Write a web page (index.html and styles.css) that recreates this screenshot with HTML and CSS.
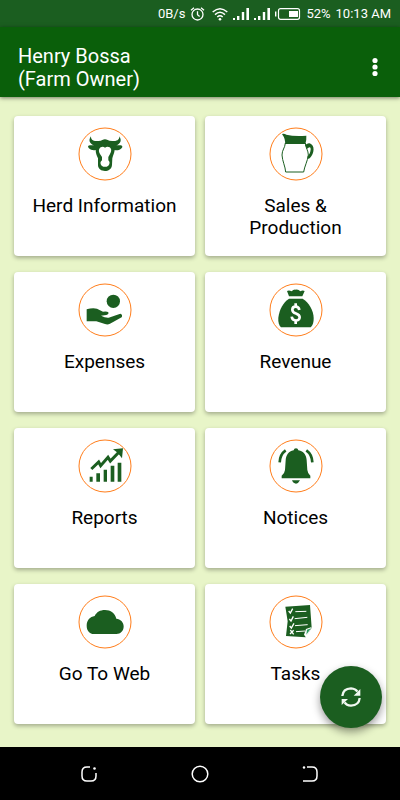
FILE: index.html
```html
<!DOCTYPE html>
<html lang="en">
<head>
  <meta charset="UTF-8" />
  <meta name="viewport" content="width=device-width, initial-scale=1.0"/>
  <title>Farm Dashboard</title>
  <link rel="stylesheet" href="styles.css">
</head>
<body>

  <div class="status-bar">
    <span>0B/s</span>
    <svg class="status-icon" width="15" height="16" viewBox="0 0 15 16">
      <circle cx="7.5" cy="8.5" r="5.5" fill="none" stroke="#fff" stroke-width="1.3"/>
      <path d="M7.5 5.3V8.7L9.6 10.6M1 4.2L4 1.7M14 4.2L11 1.7" fill="none" stroke="#fff" stroke-width="1.3"/>
    </svg>
    <svg class="status-icon wifi" width="16" height="16" viewBox="0 0 16 16">
      <path d="M.7 6Q8 -.6 15.3 6M3 8.6Q8 4 13 8.6M5.3 11Q8 8.6 10.7 11" fill="none" stroke="#fff" stroke-width="1.5"/>
      <circle cx="8" cy="13.2" r="1.3" fill="#fff"/>
    </svg>
    <svg class="status-icon" width="16" height="14" viewBox="0 0 16 14">
      <path d="M0 11h2v2H0zM4 9h2.4v4H4zM8.8 5h2.4v8H8.8zM13.4 1H16v12h-2.6z" fill="#fff"/>
    </svg>
    <svg class="status-icon" width="16" height="14" viewBox="0 0 16 14">
      <path d="M0 11h2v2H0zM4 9h2.4v4H4zM8.8 5h2.4v8H8.8zM13.4 1H16v12h-2.6z" fill="#fff"/>
    </svg>
    <svg class="status-icon" width="26" height="12" viewBox="0 0 26 12">
      <path d="M.7 3.500v5" stroke="#fff" stroke-width="1.4"/>
      <rect x="3.5" y=".7" width="21" height="10.600" rx="2" fill="none" stroke="#fff" stroke-width="1.2"/>
      <rect x="14" y="3" width="9" height="6" fill="#fff"/>
    </svg>
    <span>52%</span>
    <span>10:13 AM</span>
  </div>

  <header class="app-bar">
    <h1>Henry Bossa<br>(Farm Owner)</h1>
    <button class="menu-btn" aria-label="More options">
      <svg width="6" height="20" viewBox="0 0 6 20" fill="#fff">
        <circle cx="3" cy="3.5" r="2.6"/>
        <circle cx="3" cy="10" r="2.6"/>
        <circle cx="3" cy="16.5" r="2.6"/>
      </svg>
    </button>
  </header>

  <main class="dashboard">
    <div class="card-grid">
      <button class="card">
        <svg class="card-icon" viewBox="22 22 162 162">
          <circle class="ring" cx="103" cy="103" r="78"/>
          <path d="M61 50C60 59 67 66 83 64Q91 64 95 61Q103 57 111 61Q115 64 125 64C141 66 147 58 146 50C154 62 150 73 137 77L150 77C157 78 156 84 151 87C145 92 138 93 132 91C131 100 127 108 125 116L124 136C123 149 113 154 103 154C92 154 83 149 82 137L82 116C78 108 75 100 75 91C68 93 60 91 54 85C50 80 53 77 58 77L70 77C57 73 52 62 61 50Z"/>
          <path class="cut" d="M90 83Q97 79 103 84Q110 79 117 83C124 88 122 96 118 103L113 112V122C118 126 118 133 113 138Q103 145 93 138C88 133 88 126 94 122V112L88 103C84 96 83 88 90 83Z"/>
        </svg>
        <span>Herd Information</span>
      </button>
      <button class="card">
        <svg class="card-icon" viewBox="26 22 162 162">
          <circle class="ring" cx="107" cy="103" r="78"/>
          <path d="M65 43Q71 40 78 45Q102 51 138 48Q139 61 135 73H74Q76 58 65 43Z"/>
          <path d="M75 70C74 85 65 91 65 106C66 124 75 141 76 157H130C132 141 142 124 144 106C144 92 136 86 135 70" fill="none" stroke="#1b5e20" stroke-width="3"/>
          <path d="M135 76Q145 68 152 73C167 83 158 110 145 118L141 113C147 107 153 97 152 87Q150 78 139 88Z"/>
          <path d="M137 80Q147 71 153 80Q158 95 144 113" fill="none" stroke="#1b5e20" stroke-width="6"/>
        </svg>
        <span>Sales &amp;<br>Production</span>
      </button>
      <button class="card">
        <svg class="card-icon" viewBox="22 22 162 162">
          <circle class="ring" cx="103" cy="103" r="78"/>
          <circle cx="128" cy="77" r="20"/>
          <path d="M48 101Q65 96 79 99L97 108Q109 106 113 110Q115 116 107 118L91 120Q104 127 114 126L149 114Q157 117 153 125L118 144Q111 148 103 145L77 137H48Z"/>
        </svg>
        <span>Expenses</span>
      </button>
      <button class="card">
        <svg class="card-icon" viewBox="26 22 162 162">
          <circle class="ring" cx="107" cy="103" r="78"/>
          <path d="M80 46Q86 42 94 47Q99 41 106 42Q114 40 120 47Q127 42 133 46L126 62H86Z"/>
          <path d="M86 69H127C144 79 160 104 160 127C160 142 157 149 151 155H62C56 149 53 140 54 126C57 101 69 80 86 69Z"/>
          <path d="M117 103C115 89 96 90 96 102C96 117 118 110 118 125C118 138 96 138 94 123M106 83V94M106 132V145" fill="none" stroke="#fff" stroke-width="8"/>
        </svg>
        <span>Revenue</span>
      </button>
      <button class="card">
        <svg class="card-icon" viewBox="22 19 162 162">
          <circle class="ring" cx="103" cy="100" r="78"/>
          <path d="M57 132h9v15h-9zM77 122h11v25H77zM99 111h10v36H99zM120 99h11v48h-11zM141 90h11v57h-11z"/>
          <path d="M62 109L84 88L90 99L112 74L119 85L146 57" fill="none" stroke="#1b5e20" stroke-width="9"/>
          <path d="M127 50L157 47L154 77L147 68L137 57Z"/>
        </svg>
        <span>Reports</span>
      </button>
      <button class="card">
        <svg class="card-icon" viewBox="26 19 162 162">
          <circle class="ring" cx="107" cy="100" r="78"/>
          <path d="M100 53Q101 47 107 47Q113 47 114 53C131 56 138 68 139 83L141 112Q142 122 150 129V137H64V129Q73 122 74 112L76 83C77 68 84 56 100 53ZM95 143H119Q114 153 107 153Q99 153 95 143Z"/>
          <path d="M58 89Q59 65 76 53M156 89Q155 65 138 53" fill="none" stroke="#1b5e20" stroke-width="8"/>
        </svg>
        <span>Notices</span>
      </button>
      <button class="card">
        <svg class="card-icon" viewBox="22 18 162 162">
          <circle class="ring" cx="103" cy="99" r="78"/>
          <path d="M70 135C57 135 48 125 48 110C48 94 58 83 72 81C78 69 88 63 103 63C120 63 133 73 137 89C149 90 159 99 159 112C159 126 150 135 137 135Z"/>
        </svg>
        <span>Go To Web</span>
      </button>
      <button class="card">
        <svg class="card-icon" viewBox="26 18 162 162">
          <circle class="ring" cx="107" cy="99" r="78"/>
          <path d="M75 53L149 48L154 116L136 145L77 141L82 97Z"/>
          <path d="M85 66L90 72L97 59M87 90L92 96L99 82M88 111L93 117L101 103M90 123L100 136M100 124L89 135" fill="none" stroke="#fff" stroke-width="4"/>
          <path d="M105 68L138 67M103 89L141 85M104 110L142 107M107 128L134 126" fill="none" stroke="#fff" stroke-width="3"/>
          <path class="cut" d="M137 120L154 114L138 147L131 137Z"/>
          <path d="M140 122L152 118L138 137Z" fill="#2e9b62"/>
        </svg>
        <span>Tasks</span>
      </button>
    </div>

    <button class="refresh-btn" aria-label="Refresh">
      <svg width="22" height="22" viewBox="0 0 66 66">
        <path d="M7 30Q9 8 33 7Q47 8 52 17M59 36Q57 58 33 59Q19 58 14 49" fill="none" stroke="#f1f8f1" stroke-width="7"/>
        <path d="M61 9V29H41ZM5 57V39H24Z" fill="#f1f8f1"/>
      </svg>
    </button>
  </main>

  <nav class="nav-bar">
    <button aria-label="Recent apps">
      <svg width="18" height="18" viewBox="0 0 18 18">
        <path d="M10 2H7Q2 2 2 7V11Q2 16 7 16H11Q16 16 16 11V8" fill="none" stroke="#fff" stroke-width="1.5"/>
        <circle cx="14.5" cy="3.5" r="1.3" fill="#fff"/>
      </svg>
    </button>
    <button aria-label="Home">
      <svg width="18" height="18" viewBox="0 0 18 18">
        <circle cx="9" cy="9" r="7.8" fill="none" stroke="#fff" stroke-width="1.5"/>
      </svg>
    </button>
    <button aria-label="Back">
      <svg width="18" height="18" viewBox="0 0 18 18">
        <path d="M5 2H10Q15 2 15 7V11Q15 16 10 16H1" fill="none" stroke="#fff" stroke-width="1.5"/>
        <circle cx="2" cy="2.5" r="1.2" fill="#fff"/>
      </svg>
    </button>
  </nav>

</body>
</html>
```

FILE: styles.css
```css
* {
  box-sizing: border-box;
}

body {
  display: flex;
  flex-direction: column;
  min-height: 100vh;
  margin: 0;
  background-color: #e8f5c8;
  font-family: Roboto, sans-serif;
}

button {
  padding: 0;
  border: none;
  background: none;
  font-family: inherit;
  cursor: pointer;
}

svg {
  display: block;
  flex: none;
}

/* Status bar */
.status-bar {
  display: flex;
  align-items: center;
  justify-content: flex-end;
  gap: 5px;
  height: 27px;
  padding: 0 9px;
  background-color: #1b5e20;
  color: #fff;
  font-size: 13px;
}

.wifi {
  margin-left: 2px;
}

/* App bar */
.app-bar {
  display: flex;
  align-items: center;
  justify-content: space-between;
  padding: 18px 18px 6px;
  background-color: #0a5f0a;
  box-shadow: 0 1px 4px rgba(0, 0, 0, 0.5);
  color: #fff;
}

.app-bar h1 {
  margin: 0;
  font-size: 20px;
  font-weight: normal;
  line-height: 23px;
}

.menu-btn {
  padding: 0 4px 2px;
}

/* Cards */
.dashboard {
  position: relative;
  flex: 1;
  padding: 19px 14px 23px;
}

.card-grid {
  display: grid;
  grid-template-columns: 1fr 1fr;
  grid-auto-rows: minmax(140px, auto);
  gap: 16px 10px;
}

.card {
  display: flex;
  flex-direction: column;
  align-items: center;
  gap: 14px;
  padding: 11px 8px;
  border-radius: 4px;
  background-color: #fff;
  box-shadow: 0 2px 4px rgba(0, 0, 0, 0.3);
  color: #000;
  font-size: 19px;
  line-height: 22px;
}

.card-icon {
  width: 54px;
  height: 54px;
  fill: #1b5e20;
}

.card-icon .ring {
  fill: none;
  stroke: #ff7d1a;
  stroke-width: 3;
}

.card-icon .cut {
  fill: #fff;
}

.refresh-btn {
  position: absolute;
  right: 18px;
  bottom: 19px;
  display: flex;
  align-items: center;
  justify-content: center;
  width: 62px;
  height: 62px;
  border-radius: 50%;
  background-color: #1b5e20;
  box-shadow: 0 4px 9px rgba(0, 0, 0, 0.4);
}

/* Navigation bar */
.nav-bar {
  display: flex;
  align-items: center;
  justify-content: center;
  gap: 93px;
  height: 53px;
  background-color: #000;
}
```
